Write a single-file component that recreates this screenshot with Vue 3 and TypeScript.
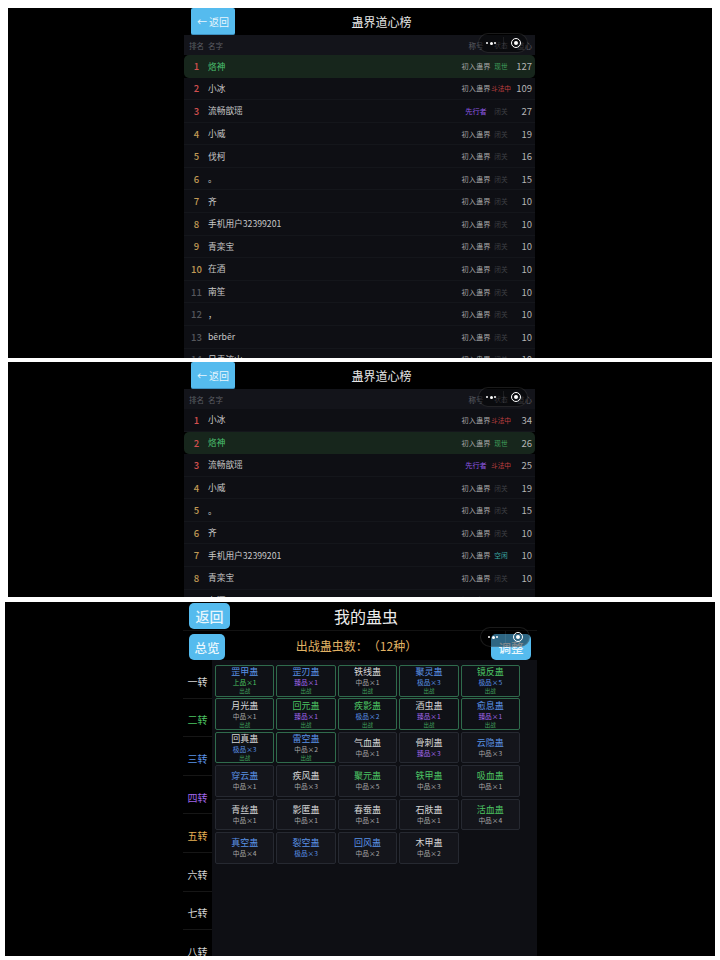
<script setup lang="ts">
interface Row {
  name: string;
  title: string;
  status: string;
  score: number;
  self?: boolean;
}
interface Gu {
  name: string;
  color: string;
  grade: string;
  count: number;
  out?: boolean;
}

const gradeColor: Record<string, string> = {
  上品: "green",
  中品: "plain",
  极品: "blue",
  臻品: "purple",
};
const statusColor: Record<string, string> = {
  闭关: "closed",
  现世: "live",
  斗法中: "fight",
  空闲: "idle",
};

const first: Row[] = [
  { name: "烙神", title: "初入蛊界", status: "现世", score: 127, self: true },
  { name: "小冰", title: "初入蛊界", status: "斗法中", score: 109 },
  { name: "流畅歆瑶", title: "先行者", status: "闭关", score: 27 },
  { name: "小威", title: "初入蛊界", status: "闭关", score: 19 },
  { name: "伐柯", title: "初入蛊界", status: "闭关", score: 16 },
  { name: "。", title: "初入蛊界", status: "闭关", score: 15 },
  { name: "齐", title: "初入蛊界", status: "闭关", score: 10 },
  { name: "手机用户32399201", title: "初入蛊界", status: "闭关", score: 10 },
  { name: "青栾宝", title: "初入蛊界", status: "闭关", score: 10 },
  { name: "在酒", title: "初入蛊界", status: "闭关", score: 10 },
  { name: "南笙", title: "初入蛊界", status: "闭关", score: 10 },
  { name: "，", title: "初入蛊界", status: "闭关", score: 10 },
  { name: "bērbēr", title: "初入蛊界", status: "闭关", score: 10 },
  { name: "日青流山", title: "初入蛊界", status: "闭关", score: 10 },
];
const second: Row[] = [
  { name: "小冰", title: "初入蛊界", status: "斗法中", score: 34 },
  { name: "烙神", title: "初入蛊界", status: "现世", score: 26, self: true },
  { name: "流畅歆瑶", title: "先行者", status: "斗法中", score: 25 },
  { name: "小威", title: "初入蛊界", status: "闭关", score: 19 },
  { name: "。", title: "初入蛊界", status: "闭关", score: 15 },
  { name: "齐", title: "初入蛊界", status: "闭关", score: 10 },
  { name: "手机用户32399201", title: "初入蛊界", status: "空闲", score: 10 },
  { name: "青栾宝", title: "初入蛊界", status: "闭关", score: 10 },
  { name: "在酒", title: "初入蛊界", status: "闭关", score: 10 },
];
const boards = [first, second];

const turns = [
  { label: "一转", color: "plain" },
  { label: "二转", color: "green" },
  { label: "三转", color: "blue" },
  { label: "四转", color: "purple" },
  { label: "五转", color: "orange" },
  { label: "六转", color: "plain" },
  { label: "七转", color: "plain" },
  { label: "八转", color: "plain" },
];

const gus: Gu[] = [
  { name: "罡甲蛊", color: "blue", grade: "上品", count: 1, out: true },
  { name: "罡刃蛊", color: "blue", grade: "臻品", count: 1, out: true },
  { name: "铁线蛊", color: "plain", grade: "中品", count: 1, out: true },
  { name: "聚灵蛊", color: "blue", grade: "极品", count: 3, out: true },
  { name: "镜反蛊", color: "green", grade: "极品", count: 5, out: true },
  { name: "月光蛊", color: "plain", grade: "中品", count: 1, out: true },
  { name: "回元蛊", color: "green", grade: "臻品", count: 1, out: true },
  { name: "疾影蛊", color: "green", grade: "极品", count: 2, out: true },
  { name: "酒虫蛊", color: "plain", grade: "臻品", count: 1, out: true },
  { name: "愈息蛊", color: "blue", grade: "臻品", count: 1, out: true },
  { name: "回真蛊", color: "plain", grade: "极品", count: 3, out: true },
  { name: "雷空蛊", color: "blue", grade: "中品", count: 2, out: true },
  { name: "气血蛊", color: "plain", grade: "中品", count: 1 },
  { name: "骨刺蛊", color: "plain", grade: "臻品", count: 3 },
  { name: "云隐蛊", color: "blue", grade: "中品", count: 3 },
  { name: "穿云蛊", color: "blue", grade: "中品", count: 1 },
  { name: "疾风蛊", color: "plain", grade: "中品", count: 3 },
  { name: "聚元蛊", color: "green", grade: "中品", count: 5 },
  { name: "铁甲蛊", color: "green", grade: "中品", count: 3 },
  { name: "吸血蛊", color: "green", grade: "中品", count: 1 },
  { name: "青丝蛊", color: "plain", grade: "中品", count: 1 },
  { name: "影匿蛊", color: "plain", grade: "中品", count: 1 },
  { name: "春蚕蛊", color: "plain", grade: "中品", count: 1 },
  { name: "石肤蛊", color: "plain", grade: "中品", count: 1 },
  { name: "活血蛊", color: "green", grade: "中品", count: 4 },
  { name: "真空蛊", color: "blue", grade: "中品", count: 4 },
  { name: "裂空蛊", color: "blue", grade: "极品", count: 3 },
  { name: "回风蛊", color: "blue", grade: "中品", count: 2 },
  { name: "木甲蛊", color: "plain", grade: "中品", count: 2 },
];

const rankClass = (rank: number): string => {
  if (rank <= 3) return "top";
  if (rank <= 10) return "mid";
  return "low";
};
</script>

<template>
  <div class="page">
    <section v-for="(rows, b) in boards" :key="b" class="panel" :class="b === 0 ? 'panel-a' : 'panel-b'">
      <div class="board">
        <header class="board-head">
          <button class="back">← 返回</button>
          <h1>蛊界道心榜</h1>
        </header>
        <div class="cols">
          <span class="c-rank">排名</span>
          <span class="c-name">名字</span>
          <span class="c-title">称号</span>
          <span class="c-status">状态</span>
          <span class="c-score">道心</span>
        </div>
        <div v-for="(row, i) in rows" :key="i" class="row" :class="{ self: row.self }">
          <span class="c-rank num" :class="rankClass(i + 1)">{{ i + 1 }}</span>
          <span class="c-name name">{{ row.name }}</span>
          <span class="c-title" :class="{ pioneer: row.title === '先行者' }">{{ row.title }}</span>
          <span class="c-status" :class="statusColor[row.status]">{{ row.status }}</span>
          <span class="c-score score">{{ row.score }}</span>
        </div>
      </div>
      <div class="capsule">
        <span class="dots"><i></i><i class="big"></i><i></i></span>
        <span class="line"></span>
        <span class="target"><i></i></span>
      </div>
    </section>

    <section class="panel panel-c">
      <div class="bag">
        <header class="bag-head">
          <button class="btn btn-back">返回</button>
          <h1>我的蛊虫</h1>
        </header>
        <div class="bag-sub">
          <button class="btn btn-small">总览</button>
          <h2>出战蛊虫数：（12种）</h2>
          <button class="btn btn-small">调整</button>
        </div>
        <div class="bag-body">
          <nav class="side">
            <div v-for="t in turns" :key="t.label" class="turn" :class="t.color">{{ t.label }}</div>
          </nav>
          <div class="grid-wrap">
            <div class="grid">
              <div v-for="g in gus" :key="g.name" class="card" :class="{ out: g.out }">
                <div class="gu-name" :class="g.color">{{ g.name }}</div>
                <div class="gu-grade" :class="gradeColor[g.grade]">{{ g.grade }}×{{ g.count }}</div>
                <div v-if="g.out" class="gu-out">出战</div>
              </div>
            </div>
          </div>
        </div>
      </div>
      <div class="capsule">
        <span class="dots"><i></i><i class="big"></i><i></i></span>
        <span class="line"></span>
        <span class="target"><i></i></span>
      </div>
    </section>
  </div>
</template>

<style scoped>
.page {
  height: 960px;
  padding-top: 8px;
  box-sizing: border-box;
  font-family: "Noto Sans CJK SC", "Noto Sans", sans-serif;
  color: #d4d4d4;
}
.panel {
  position: relative;
  display: flex;
  justify-content: center;
  overflow: hidden;
  background: #000;
  margin: 0 8px;
}
.panel-a {
  height: 350px;
}
.panel-b {
  height: 235px;
  margin-top: 4px;
}
.panel-c {
  height: 354px;
  margin: 5px 5px 0;
}

.board {
  width: 351px;
  margin-right: 1px;
}
.board-head {
  height: 27px;
  display: flex;
  align-items: center;
  padding: 0 7px;
}
.board-head h1 {
  flex: 1;
  margin: 0;
  text-align: center;
  font-size: 12px;
  font-weight: 400;
  color: #e6e6e6;
}
.back {
  width: 44px;
  height: 27px;
  border: 0;
  padding: 0;
  border-radius: 2px;
  border-bottom: 1px solid #3d8fbf;
  background: #55bbee;
  color: #e8f6fd;
  font: 400 10px "Noto Sans CJK SC", sans-serif;
}
.cols,
.row {
  display: flex;
  align-items: center;
  padding-right: 3px;
}
.cols {
  height: 20px;
  background: #13141a;
  font-size: 7.5px;
  color: #5c5e64;
}
.row {
  height: 22.58px;
  background: #0e0f14;
  border-bottom: 1px solid #14161b;
  box-sizing: border-box;
  font-size: 7.2px;
  color: #a6a6a6;
}
.row.self {
  background: #17261c;
  border-radius: 5px;
  border-bottom: 0;
}
.c-rank {
  width: 24px;
  text-align: center;
  box-sizing: border-box;
  padding-left: 1px;
}
.c-name {
  flex: 1;
}
.c-title {
  width: 30px;
  text-align: center;
  white-space: nowrap;
}
.c-status {
  width: 20px;
  text-align: center;
  white-space: nowrap;
  font-size: 6.7px;
}
.c-score {
  width: 21px;
  text-align: right;
}
.num {
  font-size: 9.5px;
  font-weight: 500;
}
.name {
  font-size: 8.7px;
  color: #c8c8c8;
}
.self .name {
  color: #4cc06f;
}
.score {
  font-size: 9.5px;
  color: #b4b4b4;
}
.top {
  color: #d24f4f;
}
.mid {
  color: #c09a55;
}
.low {
  color: #55575c;
}
.pioneer {
  color: #8f58e0;
}
.closed {
  color: #3e4044;
}
.live {
  color: #3f9f5b;
}
.fight {
  color: #c04040;
}
.idle {
  color: #3aa6a0;
}

.capsule {
  position: absolute;
  top: 25px;
  left: 470px;
  width: 50px;
  height: 20px;
  box-sizing: border-box;
  display: flex;
  align-items: center;
  border-radius: 10px;
  border: 1px solid rgba(255, 255, 255, 0.1);
  background: rgba(0, 0, 0, 0.45);
}
.panel-c .capsule {
  left: 475px;
}
.dots {
  width: 24px;
  display: flex;
  justify-content: center;
  align-items: center;
  gap: 1.5px;
}
.dots i {
  width: 2px;
  height: 2px;
  border-radius: 50%;
  background: #fff;
}
.dots i.big {
  width: 3px;
  height: 3px;
}
.line {
  width: 1px;
  height: 12px;
  background: rgba(255, 255, 255, 0.08);
}
.target {
  flex: 1;
  display: flex;
  justify-content: center;
}
.target i {
  width: 10px;
  height: 10px;
  box-sizing: border-box;
  border-radius: 50%;
  border: 1.5px solid #fff;
  display: flex;
  align-items: center;
  justify-content: center;
}
.target i::after {
  content: "";
  width: 4px;
  height: 4px;
  border-radius: 50%;
  background: #fff;
}

.bag {
  width: 354px;
  display: flex;
  flex-direction: column;
}
.bag-head {
  height: 29px;
  display: flex;
  align-items: center;
  padding: 0 35px 0 6px;
  border-bottom: 1px solid #121212;
  box-sizing: border-box;
}
.bag-head h1 {
  flex: 1;
  margin: 0;
  text-align: center;
  font-size: 16px;
  font-weight: 400;
  color: #ececec;
}
.btn {
  border: 0;
  padding: 0;
  background: #55bbee;
  border-radius: 5px;
  color: #e8f6fd;
  font-family: "Noto Sans CJK SC", sans-serif;
  font-weight: 500;
}
.btn-back {
  width: 41px;
  height: 26px;
  font-size: 14px;
}
.btn-small {
  width: 36px;
  height: 26px;
  font-size: 12.5px;
}
.btn-small:last-child {
  width: 40px;
}
.bag-sub {
  height: 29px;
  display: flex;
  align-items: flex-end;
  padding: 0 6px;
}
.bag-sub h2 {
  flex: 1;
  margin: 0 3px 0 0;
  align-self: center;
  text-align: center;
  font-size: 12px;
  font-weight: 400;
  color: #e0b264;
  text-spacing-trim: space-all;
}
.bag-body {
  flex: 1;
  display: flex;
  min-height: 0;
}
.side {
  width: 29px;
  flex: none;
}
.turn {
  height: 38.6px;
  box-sizing: border-box;
  border-bottom: 1px solid #161616;
  display: flex;
  align-items: center;
  justify-content: center;
  font-size: 10px;
  padding-top: 5px;
}
.grid-wrap {
  flex: 1;
  background: #0e0f14;
  padding: 5px 0 0 3px;
}
.grid {
  width: 305px;
  display: grid;
  grid-template-columns: repeat(5, 1fr);
  grid-auto-rows: 31.6px;
  gap: 1.8px 2px;
}
.card {
  box-sizing: border-box;
  border: 1px solid #262931;
  border-radius: 2px;
  background: #14151b;
  display: flex;
  flex-direction: column;
  align-items: center;
  justify-content: center;
}
.card.out {
  border-color: #2f6b4c;
  background: #0f1116;
}
.gu-name {
  font-size: 9px;
  line-height: 11px;
}
.gu-grade {
  font-size: 6.7px;
  line-height: 10px;
}
.gu-out {
  font-size: 5.5px;
  line-height: 8px;
  color: #3f9f5b;
}
.plain {
  color: #d6d6d6;
}
.gu-grade.plain {
  color: #a8a8a8;
}
.green {
  color: #4cc463;
}
.blue {
  color: #5a92e6;
}
.purple {
  color: #a066ea;
}
.orange {
  color: #e6b055;
}
</style>

<style>
html,
body {
  background: #fff;
}
</style>
